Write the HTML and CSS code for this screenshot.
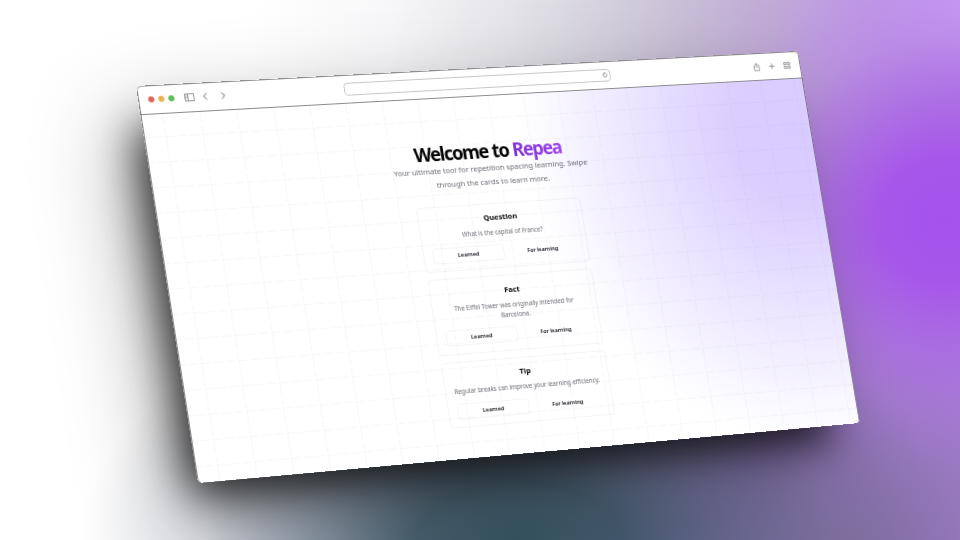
FILE: index.html
```html
<!DOCTYPE html>
<html lang="en">
<head>
<meta charset="utf-8">
<title>Repea</title>
<link rel="stylesheet" href="styles.css">
</head>
<body>
<div class="stage">
  <div class="shadow"></div>
  <div class="window">
    <header class="toolbar">
      <div class="group">
        <div class="lights"><i class="red"></i><i class="amber"></i><i class="green"></i></div>
        <svg class="panel" viewBox="0 0 10 8"><path d="M.5.5h9v7h-9zM3.5.5v7M1.3 2h1.2M1.3 3.3h1.2M1.3 4.6h1.2"/></svg>
        <svg class="chev" viewBox="0 0 6 8"><path d="M4.5.8 1.3 4l3.2 3.2"/></svg>
        <svg class="chev" viewBox="0 0 6 8"><path d="M1.3.8 4.5 4 1.3 7.2"/></svg>
      </div>
      <div class="address"><svg viewBox="0 0 6 6"><path d="M4.8 2.2A2 2 0 1 1 3 1.2M2.7.2l1 1-1 1"/></svg></div>
      <div class="group actions">
        <svg viewBox="0 0 8 9"><path d="M2.8 3H1.3v5.3h5.4V3H5.2M4 5.6V.8M2.5 2.2 4 .7l1.5 1.5"/></svg>
        <svg viewBox="0 0 8 9"><path d="M4 1.5v6M1 4.5h6"/></svg>
        <svg viewBox="0 0 8 9"><path d="M.8 1.3h2.4v2.4H.8zM4.8 1.3h2.4v2.4H4.8zM.8 5.3h2.4v2.4H.8zM4.8 5.3h2.4v2.4H4.8z"/></svg>
      </div>
    </header>
    <main class="screen">
      <svg class="grid" width="700" height="364">
        <defs>
          <pattern id="cells" x="21.5" y="21.8" width="37.1" height="25" patternUnits="userSpaceOnUse">
            <path d="M0 .5H37.1" stroke-dasharray="9 3.37"/>
            <path d="M.5 0V25" stroke-dasharray="14 3 6 2"/>
          </pattern>
        </defs>
        <rect width="700" height="364" fill="url(#cells)"/>
      </svg>
      <div class="content">
        <h1>Welcome to <span>Repea</span></h1>
        <p class="lead">Your ultimate tool for repetition spacing learning. Swipe<br>through the cards to learn more.</p>
        <section class="cards">
          <article class="card">
            <h2>Question</h2>
            <p>What is the capital of France?</p>
            <div class="buttons"><button class="outline">Learned</button><button>For learning</button></div>
          </article>
          <article class="card">
            <h2>Fact</h2>
            <p>The Eiffel Tower was originally intended for<br>Barcelona.</p>
            <div class="buttons"><button class="outline">Learned</button><button>For learning</button></div>
          </article>
          <article class="card">
            <h2>Tip</h2>
            <p>Regular breaks can improve your learning efficiency.</p>
            <div class="buttons"><button class="outline">Learned</button><button>For learning</button></div>
          </article>
        </section>
      </div>
    </main>
  </div>
</div>
</body>
</html>
```
FILE: styles.css
```css
* { box-sizing: border-box; }
body { margin: 0; font-family: "Noto Sans", sans-serif; }
h1, h2, p { margin: 0; }

.stage {
  position: relative;
  width: 960px;
  height: 540px;
  overflow: hidden;
  background:
    radial-gradient(ellipse 270px 250px at 945px 220px, #a552ec 0%, rgba(165, 83, 234, .92) 25%, rgba(166, 92, 228, .6) 48%, rgba(168, 104, 225, .22) 72%, rgba(170, 110, 225, 0) 100%),
    radial-gradient(ellipse 440px 260px at 520px 545px, #34525f 0%, rgba(54, 80, 96, .9) 24%, rgba(64, 84, 106, .6) 46%, rgba(80, 92, 120, .2) 72%, rgba(90, 100, 130, 0) 100%),
    radial-gradient(ellipse 360px 320px at 850px 560px, rgba(132, 112, 162, 1) 0%, rgba(146, 117, 184, .85) 38%, rgba(158, 114, 206, .3) 72%, rgba(160, 110, 210, 0) 100%),
    radial-gradient(ellipse 200px 110px at 970px 10px, rgba(201, 158, 244, .95) 0%, rgba(198, 155, 240, .45) 50%, rgba(196, 152, 238, 0) 100%),
    linear-gradient(97deg, #fff 0, #fff 250px, #f7f7f9 390px, #e4e4e9 510px, #d0cbda 630px, #c0acd6 760px, #b994de 880px, #b688e4 960px);
}

/* The window is drawn flat and projected onto a tilted plane. */
.window, .shadow {
  position: absolute;
  left: 0;
  top: 0;
  width: 700px;
  height: 392px;
  transform-origin: 0 0;
  transform: matrix3d(1.02119, -.04517, 0, .00009457, .15503, 1.0051, 0, -.00001582, 0, 0, 1, 0, 136, 86, 0, 1);
}
.shadow {
  border-radius: 6px;
  box-shadow: -22px 28px 40px -16px rgba(0, 0, 0, .8), -26px 32px 84px -8px rgba(0, 0, 0, .42);
}
.window {
  overflow: hidden;
  border-radius: 5px;
  background: #fff;
  display: flex;
  flex-direction: column;
}
.window::after {
  content: "";
  position: absolute;
  inset: 0;
  border: 1px solid rgba(70, 70, 76, .6);
  border-bottom-color: transparent;
  border-radius: 5px;
}

.toolbar {
  flex: none;
  height: 28.5px;
  padding: 1px 11px 0 10.3px;
  display: grid;
  grid-template-columns: 197.7px 282px 1fr;
  align-items: center;
  border-bottom: 1px solid #8b8a90;
}
.group { display: flex; align-items: center; }
.lights { display: flex; gap: 3.8px; margin-right: 10.2px; }
.lights i { width: 6px; height: 6px; border-radius: 50%; }
.red { background: #e0645a; }
.amber { background: #efb04f; }
.green { background: #5fbc56; }
.toolbar svg { fill: none; stroke: #77777b; stroke-width: .75; }
.toolbar .chev { stroke: #55555a; stroke-width: .9; }
.panel { width: 10px; height: 8px; margin-right: 8px; }
.chev { width: 6px; height: 8px; margin-right: 11.5px; }
.address {
  height: 12.5px;
  border: 1px solid #c6c6c8;
  border-radius: 4px;
  padding-right: 2px;
  display: flex;
  align-items: center;
  justify-content: flex-end;
}
.address svg { width: 6px; height: 6px; }
.actions { justify-content: flex-end; gap: 8.8px; }
.actions svg { width: 8px; height: 9px; }

.screen {
  flex: 1;
  position: relative;
  background: radial-gradient(ellipse 300px 330px at 680px 55px, #d8caff 0%, #dccfff 25%, #e7e0ff 50%, #f3efff 74%, #fbfaff 90%, #fff 100%);
}
.grid { position: absolute; left: 0; top: 0; }
.grid path { stroke: rgba(90, 90, 110, .055); stroke-width: 1; fill: none; }

.content {
  position: relative;
  display: flex;
  flex-direction: column;
  align-items: center;
  width: 695px;
  padding-top: 43.5px;
  text-align: center;
}
h1 { font-size: 19.2px; line-height: 25px; font-weight: 700; letter-spacing: -1.4px; word-spacing: .6px; color: #050507; white-space: nowrap; }
h1 span { background: linear-gradient(90deg, #7c2fd6, #a044ee); -webkit-background-clip: text; background-clip: text; color: transparent; padding-right: 1.4px; }
.lead { margin-top: -.6px; font-size: 7.8px; line-height: 13.5px; color: #6c6c76; white-space: nowrap; }

.cards { position: relative; display: flex; flex-direction: column; gap: 7px; width: 174px; margin: 14.4px 0 0 2px; }
.card { padding: 7.5px 9px 7.5px; border: 1px solid rgba(60, 60, 80, .05); border-radius: 4px; }
.card h2 { font-size: 7.8px; line-height: 12px; font-weight: 700; color: #050507; }
.card p { margin-top: 5px; font-size: 6.25px; line-height: 9.7px; color: #6c6c76; white-space: nowrap; }
.buttons { display: grid; grid-template-columns: 1fr 1fr; gap: 3px; margin-top: 6.8px; }
button {
  height: 16px;
  padding: 0;
  border: 1px solid transparent;
  border-radius: 3px;
  background: none;
  font: 600 5.6px/14px "Noto Sans", sans-serif;
  color: #0a0a14;
}
.outline { border-color: rgba(60, 60, 80, .05); }
```
